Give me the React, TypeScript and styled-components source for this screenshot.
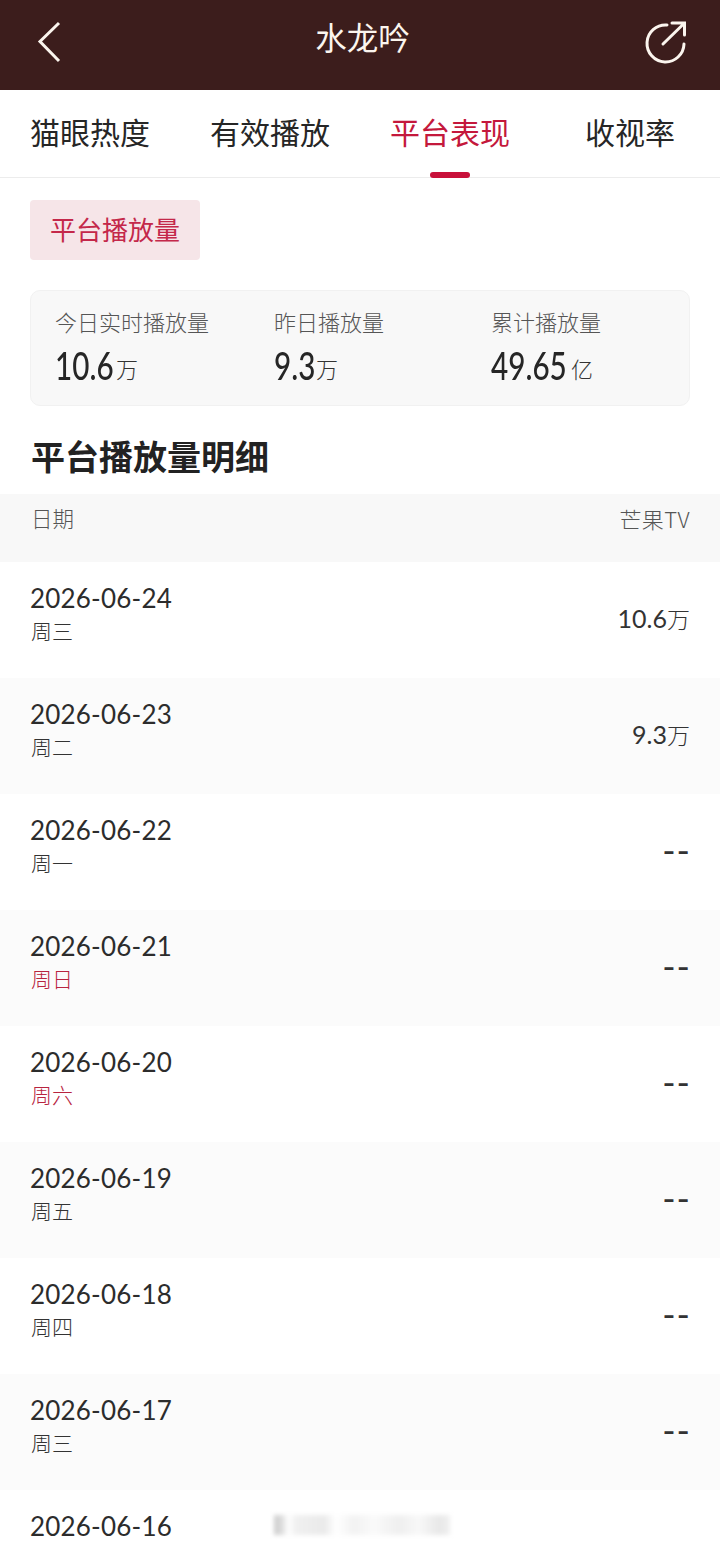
import React from "react";
import styled, { createGlobalStyle } from "styled-components";

const GlobalStyle = createGlobalStyle`
  html, body {
    margin: 0;
    padding: 0;
    background: #fff;
    font-family: "Noto Sans CJK SC", "Noto Sans", sans-serif;
  }
`;

const NUM_FONT = `"Lato", "Noto Sans CJK SC", sans-serif`;

const Page = styled.div`
  position: relative;
  width: 720px;
  height: 1542px;
  overflow: hidden;
  background: #fff;
  color: #222;
`;

const TopBar = styled.header`
  height: 90px;
  background: #3c1d1c;
  display: flex;
  align-items: center;
  justify-content: space-between;
  padding: 0 33px 6px 36px;
  box-sizing: border-box;
  color: #fbf5ee;
`;

const Title = styled.h1`
  margin: 0 0 12px 18px;
  font-size: 31.5px;
  font-weight: 400;
  line-height: 40px;
`;

const IconSlot = styled.svg`
  display: block;
  flex: none;
`;

const Tabs = styled.nav`
  height: 88px;
  display: flex;
  border-bottom: 1px solid #ececec;
  box-sizing: border-box;
`;

const Tab = styled.div<{ $active?: boolean }>`
  position: relative;
  flex: 1;
  display: flex;
  justify-content: center;
  padding-top: 20px;
  font-size: 30px;
  line-height: 42px;
  font-weight: 400;
  color: ${(p) => (p.$active ? "#c4183c" : "#262626")};
`;

const TabMark = styled.span`
  position: absolute;
  left: 50%;
  bottom: -1px;
  width: 40px;
  height: 6px;
  margin-left: -20px;
  border-radius: 3px;
  background: #c8103a;
`;

const Chip = styled.div`
  width: 170px;
  height: 60px;
  margin: 22px 0 0 30px;
  border-radius: 4px;
  background: #f6e5e8;
  color: #c4284a;
  font-size: 26px;
  line-height: 58px;
  text-align: center;
`;

const StatsCard = styled.section`
  display: grid;
  grid-template-columns: 219px 217px 1fr;
  height: 116px;
  margin: 30px 30px 0;
  padding: 14px 0 0 24px;
  box-sizing: border-box;
  background: #f8f8f8;
  border: 1px solid #f1f1f1;
  border-radius: 10px;
`;

const StatLabel = styled.div`
  font-size: 22px;
  line-height: 32px;
  font-weight: 300;
  color: #555;
`;

const StatValue = styled.div`
  display: flex;
  align-items: baseline;
  margin-top: 8px;
  line-height: 40px;
`;

/* the reference digits are a condensed face, so Lato is squeezed and the box width comes from the data */
const StatDigits = styled.span<{ $width: number }>`
  display: inline-block;
  width: ${(p) => p.$width}px;
  font-family: ${NUM_FONT};
  font-size: 38px;
  font-weight: 500;
  color: #262626;
  transform: scaleX(0.78);
  transform-origin: left center;
`;

const StatUnit = styled.span`
  position: relative;
  top: -2px;
  font-size: 22px;
  font-weight: 300;
  color: #333;
  margin-left: 2px;
`;

const SectionTitle = styled.h2`
  margin: 28px 0 16px 31px;
  font-size: 34px;
  line-height: 44px;
  font-weight: 700;
  color: #222;
`;

const TableHead = styled.div`
  display: flex;
  justify-content: space-between;
  height: 68px;
  padding: 7px 30px 0 31px;
  box-sizing: border-box;
  background: #f8f8f8;
  font-size: 21.5px;
  line-height: 34px;
  font-weight: 300;
  color: #555;
`;

const HeadRight = styled.span`
  font-size: 22px;
  letter-spacing: 0.4px;
`;

const Row = styled.div<{ $shaded: boolean }>`
  height: 116px;
  flex: none;
  display: flex;
  justify-content: space-between;
  align-items: center;
  padding: 0 30px;
  box-sizing: border-box;
  background: ${(p) => (p.$shaded ? "#fbfbfb" : "#fff")};
`;

const CutRow = styled.div`
  padding: 19px 30px 0;
`;

const DateCell = styled.div`
  padding-bottom: 14px;
`;

const DateText = styled.div`
  font-family: ${NUM_FONT};
  font-size: 26px;
  line-height: 34px;
  letter-spacing: 0.2px;
  color: #2c2c2c;
`;

const Weekday = styled.div<{ $weekend: boolean }>`
  padding-left: 1px;
  font-size: 21px;
  line-height: 30px;
  font-weight: 300;
  color: ${(p) => (p.$weekend ? "#b8243f" : "#333")};
`;

const PlayCount = styled.div<{ $empty: boolean }>`
  padding-bottom: 4px;
  margin-right: ${(p) => (p.$empty ? "-1px" : "0")};
  font-family: ${NUM_FONT};
  font-size: ${(p) => (p.$empty ? "36px" : "25px")};
  line-height: 34px;
  letter-spacing: ${(p) => (p.$empty ? "1px" : "0")};
  color: #333;
`;

const PlayUnit = styled.span`
  font-family: "Noto Sans CJK SC", sans-serif;
  font-size: 23px;
  font-weight: 300;
`;

const Smudge = styled.div`
  position: absolute;
  left: 274px;
  top: 1515px;
  width: 176px;
  height: 20px;
  filter: blur(2px);
  background: linear-gradient(
    90deg,
    #ccc 0,
    #ddd 8px,
    #fff 14px,
    #f0f0f0 22px,
    #eaeaea 50px,
    #fff 62px,
    #f2f2f2 80px,
    #fafafa 100px,
    #efefef 125px,
    #f8f8f8 145px,
    #e8e8e8 165px,
    #f0f0f0 176px
  );
`;

const rows = [
  { date: "2026-06-24", day: "周三", num: "10.6", unit: "万" },
  { date: "2026-06-23", day: "周二", num: "9.3", unit: "万" },
  { date: "2026-06-22", day: "周一", num: "--", unit: "" },
  { date: "2026-06-21", day: "周日", num: "--", unit: "" },
  { date: "2026-06-20", day: "周六", num: "--", unit: "" },
  { date: "2026-06-19", day: "周五", num: "--", unit: "" },
  { date: "2026-06-18", day: "周四", num: "--", unit: "" },
  { date: "2026-06-17", day: "周三", num: "--", unit: "" },
];

const stats = [
  { label: "今日实时播放量", value: "10.6", unit: "万", width: 59 },
  { label: "昨日播放量", value: "9.3", unit: "万", width: 40 },
  { label: "累计播放量", value: "49.65", unit: "亿", width: 78 },
];

function App() {
  return (
    <Page>
      <GlobalStyle />
      <TopBar>
        <IconSlot width="26" height="44" viewBox="0 0 26 44" fill="none" stroke="currentColor" strokeWidth="3">
          <path d="M23 3 L4 21.5 L23 41" />
        </IconSlot>
        <Title>水龙吟</Title>
        <IconSlot width="42" height="44" viewBox="0 0 42 44" fill="none" stroke="currentColor" strokeWidth="3" strokeLinecap="round">
          <path d="M22 5 A18.5 18.5 0 1 0 39 24" />
          <path d="M18 24 L39 3.5 M27 3 H39.5 V15" />
        </IconSlot>
      </TopBar>
      <Tabs>
        <Tab>猫眼热度</Tab>
        <Tab>有效播放</Tab>
        <Tab $active>
          平台表现
          <TabMark />
        </Tab>
        <Tab>收视率</Tab>
      </Tabs>
      <Chip>平台播放量</Chip>
      <StatsCard>
        {stats.map((s) => (
          <div key={s.label}>
            <StatLabel>{s.label}</StatLabel>
            <StatValue>
              <StatDigits $width={s.width}>{s.value}</StatDigits>
              <StatUnit>{s.unit}</StatUnit>
            </StatValue>
          </div>
        ))}
      </StatsCard>
      <SectionTitle>平台播放量明细</SectionTitle>
      <TableHead>
        <span>日期</span>
        <HeadRight>芒果TV</HeadRight>
      </TableHead>
      {rows.map((r, i) => (
        <Row key={r.date} $shaded={i % 2 === 1}>
          <DateCell>
            <DateText>{r.date}</DateText>
            <Weekday $weekend={r.day === "周日" || r.day === "周六"}>{r.day}</Weekday>
          </DateCell>
          <PlayCount $empty={!r.unit}>
            {r.num}
            {r.unit && <PlayUnit>{r.unit}</PlayUnit>}
          </PlayCount>
        </Row>
      ))}
      <CutRow>
        <DateText>2026-06-16</DateText>
      </CutRow>
      <Smudge />
    </Page>
  );
}

export default App;
